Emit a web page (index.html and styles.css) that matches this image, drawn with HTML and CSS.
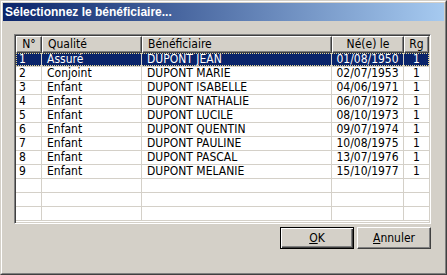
FILE: index.html
```html
<!DOCTYPE html>
<html lang="fr">
<head>
  <meta charset="UTF-8"/>
  <title>Sélectionnez le bénéficiaire...</title>
  <link rel="stylesheet" href="styles.css">
</head>
<body>

  <div class="window">
    <div class="frame">

      <!-- Title bar -->
      <div class="titlebar">Sélectionnez le bénéficiaire...</div>

      <div class="content">

        <!-- List view -->
        <div class="list">
          <div class="row head">
            <div class="c num center">N°</div>
            <div class="c qual">Qualité</div>
            <div class="c name">Bénéficiaire</div>
            <div class="c date center">Né(e) le</div>
            <div class="c rg center">Rg</div>
          </div>
          <div id="rows"></div>
        </div>

        <!-- Buttons -->
        <div class="buttons">
          <button class="btn default"><u>O</u>K</button>
          <button class="btn"><u>A</u>nnuler</button>
        </div>

      </div>
    </div>
  </div>

  <script>
    const people = [
      ['1','Assuré','DUPONT JEAN','01/08/1950','1'],
      ['2','Conjoint','DUPONT MARIE','02/07/1953','1'],
      ['3','Enfant','DUPONT ISABELLE','04/06/1971','1'],
      ['4','Enfant','DUPONT NATHALIE','06/07/1972','1'],
      ['5','Enfant','DUPONT LUCILE','08/10/1973','1'],
      ['6','Enfant','DUPONT QUENTIN','09/07/1974','1'],
      ['7','Enfant','DUPONT PAULINE','10/08/1975','1'],
      ['8','Enfant','DUPONT PASCAL','13/07/1976','1'],
      ['9','Enfant','DUPONT MELANIE','15/10/1977','1'],
      ['','','','',''],
      ['','','','',''],
      ['','','','','']
    ];
    const cls = ['num','qual','name','date center','rg center'];
    const box = document.getElementById('rows');
    people.forEach((p,i)=>{
      const row = document.createElement('div');
      row.className = 'row' + (i===0 ? ' selected' : '');
      row.innerHTML = p.map((v,j)=>`<div class="c ${cls[j]}">${v}</div>`).join('');
      box.appendChild(row);
    });
  </script>
</body>
</html>
```

FILE: styles.css
```css
:root {
  --face: #d4d0c8;
  --shadow: #808080;
  --dark: #404040;
  --navy: #0a246a;
  --grid: #d4d0c8;
}
* { margin:0; padding:0; box-sizing:border-box }
body {
  background:var(--face);
  font-family:'DejaVu Sans Condensed','DejaVu Sans',sans-serif;
  font-stretch:condensed;
  font-size:12px;
  color:#000;
}

/* Window frame */
.window {
  width:447px; height:275px;
  border:1px solid;
  border-color:var(--face) var(--dark) var(--dark) var(--face);
}
.frame {
  height:100%;
  border:1px solid;
  border-color:#fff var(--shadow) var(--shadow) #fff;
  padding:1px;
  display:flex; flex-direction:column;
}

/* Title bar */
.titlebar {
  height:18px;
  background:linear-gradient(to right, var(--navy), #a6caf0);
  color:#fff;
  font-family:'Liberation Sans',Arial,sans-serif;
  font-stretch:normal;
  font-weight:bold; font-size:12px;
  line-height:18px;
  padding-left:2px;
  white-space:nowrap;
}

.content {
  flex:1;
  padding:13px 13px 0 11px;
  display:flex; flex-direction:column;
}

/* List view */
.list {
  height:190px;
  background:#fff;
  border:1px solid;
  border-color:var(--shadow) #fff #fff var(--shadow);
  box-shadow:inset 1px 1px 0 var(--dark), inset -1px -1px 0 var(--face);
  padding:1px;
  overflow:hidden;
}
.row {
  display:flex;
  height:14px;
  line-height:13px;
  position:relative;
}
.row .c {
  border-right:1px solid var(--grid);
  border-bottom:1px solid var(--grid);
  padding-left:5px;
  white-space:nowrap; overflow:hidden;
}
.row .center { text-align:center; padding-left:0 }
.c.num { width:26px; padding-left:3px }
.c.qual { width:100px }
.c.name { width:190px }
.c.date { width:72px }
.c.rg { width:25px; border-right:none }

/* Header */
.row.head { height:17px; line-height:15px }
.row.head .c {
  background:var(--face);
  border:1px solid;
  border-color:#fff var(--dark) var(--dark) #fff;
  box-shadow:inset -1px -1px 0 var(--shadow);
}
.row.head .c.num { padding-left:0; text-align:center }
.row.head .c.rg { border-right:1px solid var(--dark) }

/* Selected row */
.row.selected { background:var(--navy); color:#fff }
.row.selected::after {
  content:''; position:absolute; inset:0 0 1px 0;
  border:1px dotted #e8d890;
  pointer-events:none;
}

/* Buttons */
.buttons {
  display:flex; justify-content:flex-end; gap:3px;
  margin-top:3px;
}
.btn {
  width:74px; height:22px;
  background:var(--face);
  font:inherit;
  border:1px solid;
  border-color:#fff var(--dark) var(--dark) #fff;
  box-shadow:inset -1px -1px 0 var(--shadow);
  cursor:pointer;
}
.btn.default {
  border:1px solid #000;
  box-shadow:inset 1px 1px 0 #fff, inset -1px -1px 0 var(--dark), inset -2px -2px 0 var(--shadow);
}
.btn u { text-decoration:underline }
```
